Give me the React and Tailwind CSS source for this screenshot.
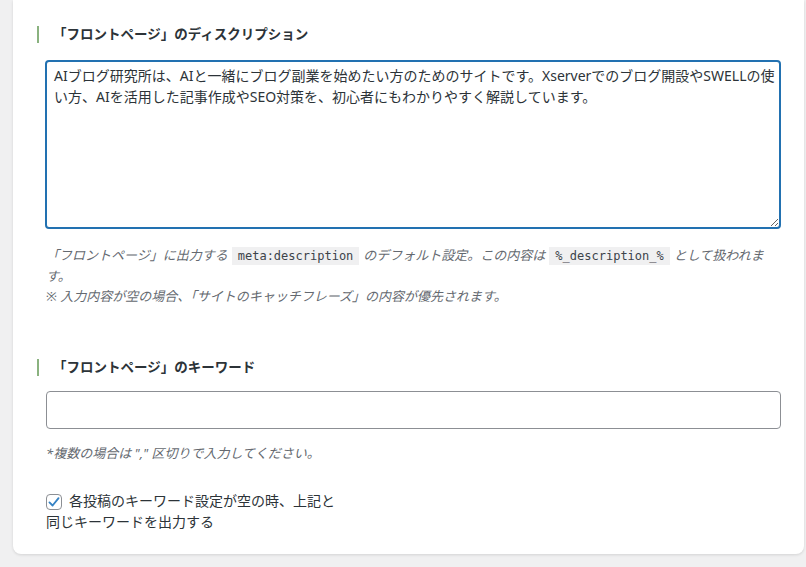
import React from 'react';

const FONT = { fontFamily: '"Noto Sans", "Noto Sans CJK JP", sans-serif' };

const SectionTitle = ({ children }) => (
  <h3 className="border-l-2 border-[#8ab27f] pl-[14px] h-[17px] leading-[17px] text-[13.5px] font-bold text-[#2c3338]">
    {children}
  </h3>
);

const Code = ({ children }) => (
  <code
    className="not-italic bg-[#f0f0f1] px-[6px] py-[2px] mx-[4px] text-[12px] text-[#3c434a]"
    style={{ fontFamily: '"DejaVu Sans Mono", "Liberation Mono", monospace' }}
  >
    {children}
  </code>
);

export default function App() {
  const description =
    'AIブログ研究所は、AIと一緒にブログ副業を始めたい方のためのサイトです。Xserverでのブログ開設やSWELLの使い方、AIを活用した記事作成やSEO対策を、初心者にもわかりやすく解説しています。';

  return (
    <div className="min-h-[567px] bg-[#f0f0f1] text-[#2c3338]" style={FONT}>
      <div className="ml-[13px] w-[791px] bg-white rounded-b-[8px] shadow-[0_1px_3px_rgba(0,0,0,0.12)] px-[24px] pt-[26px] pb-[22px]">
        {/* description */}
        <SectionTitle>「フロントページ」のディスクリプション</SectionTitle>
        <textarea
          className="block mt-[17px] ml-[8px] w-[736px] h-[169px] border-2 border-[#2271b1] rounded-[4px] pl-[7px] pr-[4px] pt-[3px] text-[14px] leading-[21px] text-[#2c3338] outline-none"
          style={FONT}
          defaultValue={description}
        />
        <div className="mt-[16px] ml-[9px] text-[13px] leading-[20px] italic text-[#646970]">
          <p>
            「フロントページ」に出力する<Code>meta:description</Code>のデフォルト設定。この内容は
            <Code>%_description_%</Code>として扱われます。
          </p>
          <p>※ 入力内容が空の場合、「サイトのキャッチフレーズ」の内容が優先されます。</p>
        </div>

        {/* keywords */}
        <div className="mt-[53px]">
          <SectionTitle>「フロントページ」のキーワード</SectionTitle>
        </div>
        <input
          type="text"
          className="block mt-[15px] ml-[9px] w-[735px] h-[38px] border border-[#8c8f94] rounded-[4px] px-[8px] text-[14px] outline-none"
        />
        <p className="mt-[14px] ml-[9px] text-[13px] leading-[20px] italic text-[#646970]">
          *複数の場合は "," 区切りで入力してください。
        </p>

        <label className="block mt-[27px] ml-[9px] w-[292px] text-[14px] leading-[21px] text-[#2c3338]">
          <span className="inline-flex align-[-3px] items-center justify-center w-[16px] h-[16px] mr-[7px] border border-[#8c8f94] rounded-[4px] bg-white">
            <svg width="14" height="14" viewBox="0 0 20 20">
              <path d="M3.5 10.5 L8 15 L16.5 4.5" fill="none" stroke="#3582c4" strokeWidth="2.6" strokeLinecap="round" strokeLinejoin="round" />
            </svg>
          </span>
          各投稿のキーワード設定が空の時、上記と同じキーワードを出力する
        </label>
      </div>
    </div>
  );
}
